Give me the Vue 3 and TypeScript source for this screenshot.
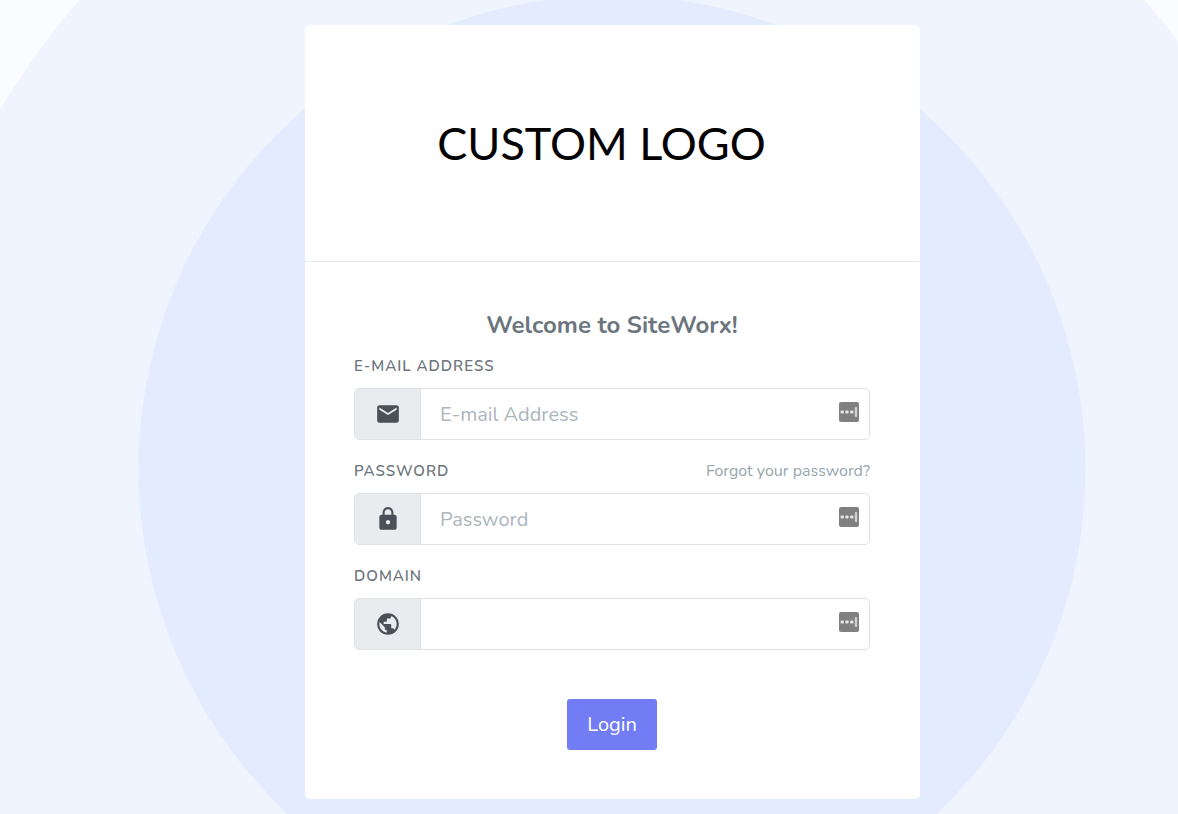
<script setup lang="ts">
import { reactive } from 'vue'

interface Field {
  id: 'email' | 'password' | 'domain'
  label: string
  type: string
  placeholder: string
  icon: string
  forgot?: boolean
}

const fields: Field[] = [
  {
    id: 'email',
    label: 'E-mail Address',
    type: 'email',
    placeholder: 'E-mail Address',
    icon: 'M20 4H4c-1.1 0-2 .9-2 2v12c0 1.1.9 2 2 2h16c1.1 0 2-.9 2-2V6c0-1.1-.9-2-2-2zm0 4-8 5-8-5V6l8 5 8-5v2z',
  },
  {
    id: 'password',
    label: 'Password',
    type: 'password',
    placeholder: 'Password',
    icon: 'M18 8h-1V6c0-2.76-2.24-5-5-5S7 3.24 7 6v2H6c-1.1 0-2 .9-2 2v10c0 1.1.9 2 2 2h12c1.1 0 2-.9 2-2V10c0-1.1-.9-2-2-2zm-6 9c-1.1 0-2-.9-2-2s.9-2 2-2 2 .9 2 2-.9 2-2 2zm3.1-9H8.9V6c0-1.71 1.39-3.1 3.1-3.1s3.1 1.39 3.1 3.1v2z',
    forgot: true,
  },
  {
    id: 'domain',
    label: 'Domain',
    type: 'text',
    placeholder: '',
    icon: 'M12 2C6.48 2 2 6.48 2 12s4.48 10 10 10 10-4.48 10-10S17.52 2 12 2zm-1 17.93c-3.95-.49-7-3.85-7-7.93 0-.62.08-1.21.21-1.79L9 15v1c0 1.1.9 2 2 2v1.93zm6.9-2.54c-.26-.81-1-1.39-1.9-1.39h-1v-3c0-.55-.45-1-1-1H8v-2h2c.55 0 1-.45 1-1V7h2c1.1 0 2-.9 2-2v-.41c2.93 1.19 5 4.06 5 7.41 0 2.08-.8 3.97-2.1 5.39z',
  },
]

const values = reactive<Record<Field['id'], string>>({ email: '', password: '', domain: '' })
</script>

<template>
  <main class="page">
    <section class="card">
      <header class="brand">
        <span class="logo">CUSTOM LOGO</span>
      </header>
      <form class="body" @submit.prevent>
        <h1 class="title">Welcome to SiteWorx!</h1>
        <div v-for="field in fields" :key="field.id" class="field">
          <div class="caption">
            <label class="label" :for="field.id">{{ field.label }}</label>
            <a v-if="field.forgot" class="forgot" href="#">Forgot your password?</a>
          </div>
          <div class="group">
            <span class="addon">
              <svg class="icon" viewBox="0 0 24 24" aria-hidden="true"><path :d="field.icon" /></svg>
            </span>
            <input
              :id="field.id"
              v-model="values[field.id]"
              class="input"
              :type="field.type"
              :placeholder="field.placeholder"
            />
            <button class="fill" type="button" :aria-label="`Fill ${field.label}`">
              <svg class="fill-icon" viewBox="0 0 20 20" aria-hidden="true">
                <rect width="20" height="20" rx="2" fill="#808080" />
                <g fill="#e8e8e8">
                  <rect x="1.6" y="8.4" width="3.2" height="3.2" rx="1" />
                  <rect x="6.4" y="8.4" width="3.2" height="3.2" rx="1" />
                  <rect x="11.2" y="8.4" width="3.2" height="3.2" rx="1" />
                </g>
                <rect x="15.8" y="5" width="2.4" height="10" rx="1" fill="#d0d0d0" />
              </svg>
            </button>
          </div>
        </div>
        <button class="login" type="submit">Login</button>
      </form>
    </section>
  </main>
</template>

<style>
body {
  margin: 0;
}
</style>

<style scoped>
.page {
  box-sizing: border-box;
  min-height: 100vh;
  display: flex;
  justify-content: center;
  align-items: flex-start;
  padding: 25px 0 15px 47px;
  font-family: Nunito, Lato, "Noto Sans", sans-serif;
  color: #6c757d;
  background: radial-gradient(
    circle at calc(50% + 23px) 469px,
    #e3ecff 473px,
    #eff4ff 474px,
    #eff4ff 709px,
    #fafcff 710px
  );
}

.card {
  width: 100%;
  max-width: 615px;
  border-radius: 5px;
  background: #fff;
}

.brand {
  display: flex;
  justify-content: center;
  padding: 84px 22px 84px 0;
  border-bottom: 1px solid #e9ecef;
}

.logo {
  font-family: Lato, "Open Sans", sans-serif;
  font-size: 45px;
  line-height: 68px;
  color: #000;
}

.body {
  display: flex;
  flex-direction: column;
  padding: 47px 50px 49px 49px;
}

.title {
  margin: 0 0 12px;
  font-size: 24px;
  line-height: 32px;
  font-weight: 700;
  text-align: center;
}

.field {
  margin-bottom: 18px;
}

.caption {
  display: flex;
  justify-content: space-between;
  align-items: center;
  height: 25px;
  margin-bottom: 10px;
}

.label {
  font-size: 15px;
  font-weight: 600;
  letter-spacing: 1px;
  text-transform: uppercase;
}

.forgot {
  font-size: 16px;
  color: #98a6ad;
  text-decoration: none;
}

.group {
  display: flex;
  box-sizing: border-box;
  height: 52px;
  border: 1px solid #dee2e6;
  border-radius: 5px;
  overflow: hidden;
  background: #fff;
}

.group:focus-within {
  border-color: #727cf5;
}

.addon {
  display: flex;
  align-items: center;
  justify-content: center;
  width: 65px;
  border-right: 1px solid #dee2e6;
  background: #e9ecef;
}

.icon {
  width: 26px;
  height: 26px;
  fill: #495057;
}

.input {
  flex: 1;
  min-width: 0;
  padding: 0 19px;
  border: 0;
  outline: 0;
  background: transparent;
  font-family: inherit;
  font-size: 20px;
  color: #6c757d;
}

.input::placeholder {
  color: #adb5bd;
  opacity: 1;
}

.fill {
  display: flex;
  align-self: flex-start;
  margin: 13px 10px 0 0;
  padding: 0;
  border: 0;
  background: none;
}

.fill-icon {
  width: 20px;
  height: 20px;
}

.login {
  align-self: center;
  height: 51px;
  margin-top: 31px;
  padding: 0 20px;
  border: 0;
  border-radius: 3px;
  background: #727cf5;
  color: #fff;
  font-family: inherit;
  font-size: 20px;
}
</style>
